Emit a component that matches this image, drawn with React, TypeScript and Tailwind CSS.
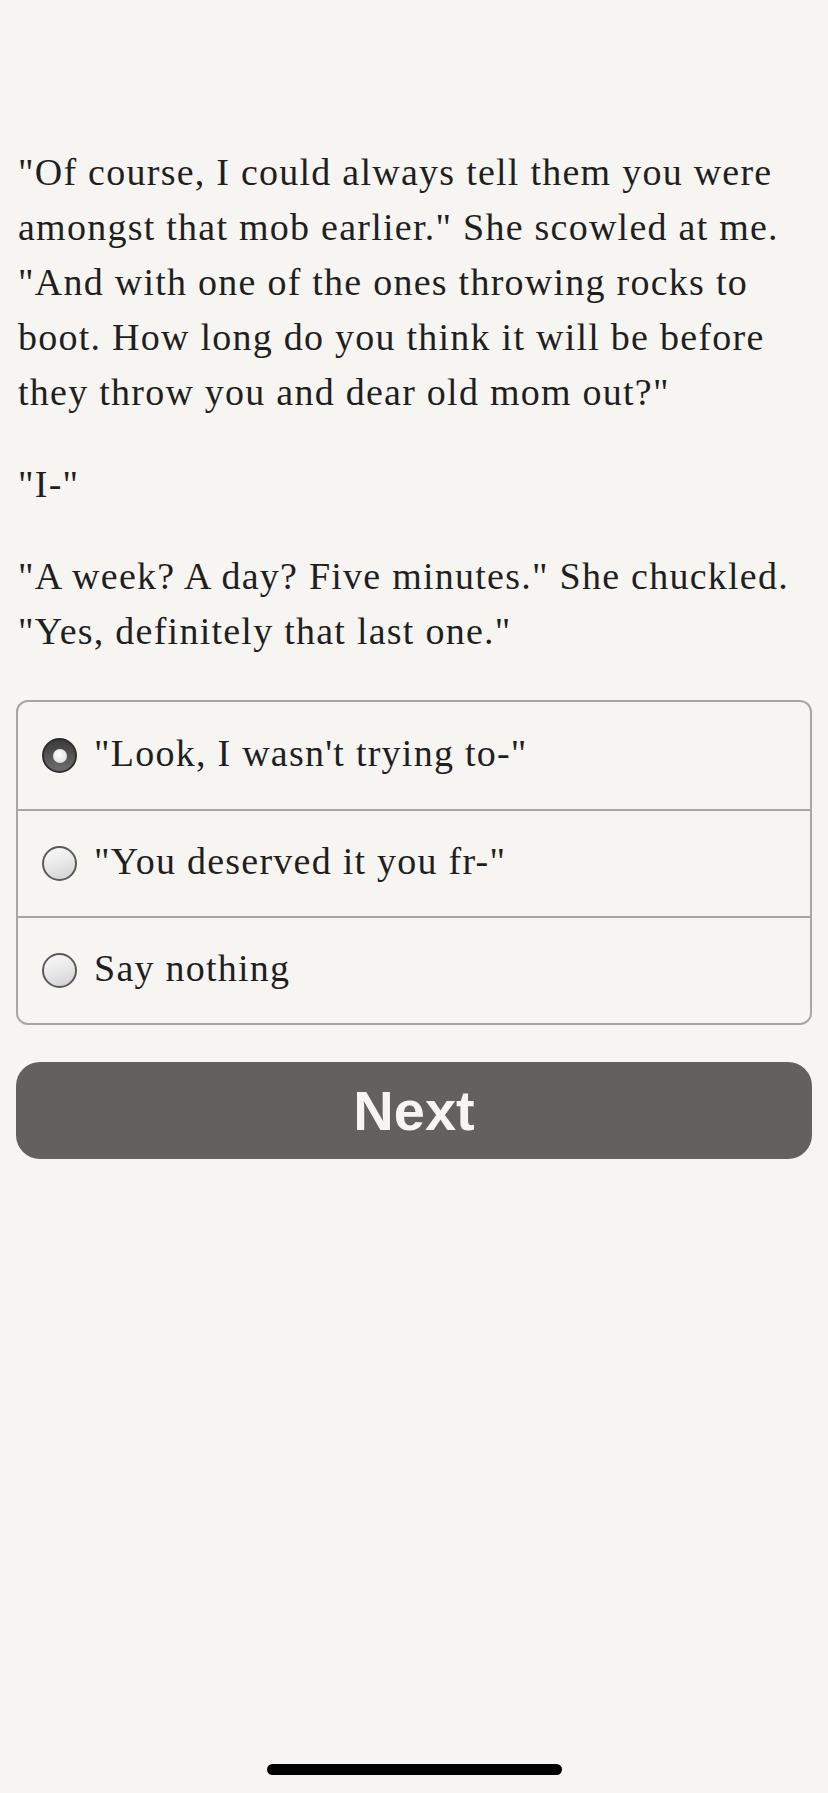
import { useState } from "react";

const choices = [
  "\"Look, I wasn't trying to-\"",
  "\"You deserved it you fr-\"",
  "Say nothing",
];

function Radio({ checked }: { checked: boolean }) {
  if (checked) {
    return (
      <span className="flex h-[35px] w-[35px] shrink-0 items-center justify-center rounded-full border-2 border-[#2e2e2e] bg-[linear-gradient(180deg,#3a3a3a_0%,#6e6e6e_100%)]">
        <span className="h-[14px] w-[14px] rounded-full bg-[radial-gradient(circle_at_45%_40%,#ffffff_0%,#d6d6d6_100%)]" />
      </span>
    );
  }
  return (
    <span className="h-[35px] w-[35px] shrink-0 rounded-full border-2 border-[#5a5a5a] bg-[linear-gradient(160deg,#fbfbfb_0%,#e6e6e6_55%,#cfcfcf_100%)]" />
  );
}

export default function App() {
  const [picked, setPicked] = useState(0);

  return (
    <div className="min-h-[1793px] bg-[#f7f5f2] px-4 pt-[145px] text-[#1f1f1f] font-['Liberation_Serif',serif] flex flex-col">
      <div className="px-[2px] text-[38px] leading-[55px] tracking-[1.25px]">
        <p className="mb-[37px]">
          "Of course, I could always tell them you were amongst that mob
          earlier." She scowled at me. "And with one of the ones throwing rocks
          to boot. How long do you think it will be before they throw you and
          dear old mom out?"
        </p>
        <p className="mb-[37px]">"I-"</p>
        <p>
          "A week? A day? Five minutes." She chuckled. "Yes, definitely that
          last one."
        </p>
      </div>

      {/* answer list */}
      <div className="mt-[41px] flex flex-col rounded-[12px] border-2 border-[#a6a6a6]">
        {choices.map((c, i) => (
          <button
            key={i}
            onClick={() => setPicked(i)}
            className={
              "flex h-[107px] items-center gap-[17px] pl-[24px] text-left text-[38px] tracking-[1.25px] " +
              (i > 0 ? "border-t-2 border-[#a6a6a6]" : "")
            }
          >
            <Radio checked={picked === i} />
            <span className="pb-[4px]">{c}</span>
          </button>
        ))}
      </div>

      <button className="mt-[37px] flex h-[97px] items-center justify-center rounded-[24px] bg-[#636160] font-['Liberation_Sans',Arial,sans-serif] text-[56px] font-bold text-[#f7f5f2]">
        Next
      </button>

      {/* home indicator */}
      <div className="mt-auto flex justify-center pb-[18px]">
        <div className="h-[11px] w-[295px] rounded-full bg-black" />
      </div>
    </div>
  );
}
